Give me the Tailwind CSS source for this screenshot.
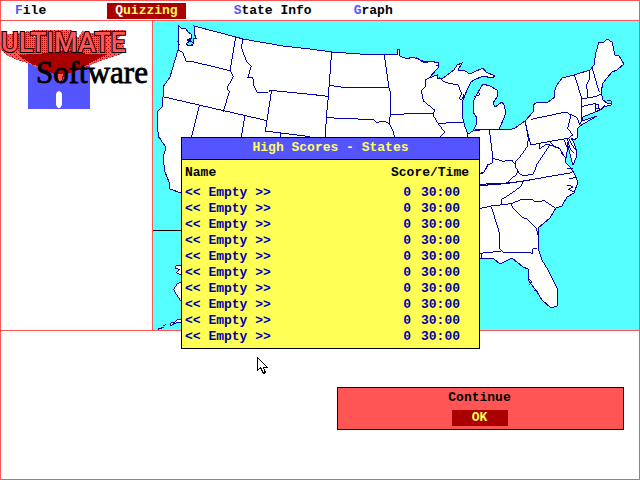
<!DOCTYPE html>
<html lang="en">
<head>
<meta charset="utf-8">
<meta name="viewport" content="width=device-width, initial-scale=1">
<title>Ultimate Software - High Scores</title>
<script src="https://cdn.jsdelivr.net/npm/@tailwindcss/browser@4"></script>
</head>
<body class="relative flex min-h-screen flex-col border border-[#ff5555] bg-white font-['Liberation_Mono',monospace] text-[13px] leading-4 font-bold text-black">
  <nav class="flex h-5 items-center border-b border-[#ff5555] pl-1.5">
    <a href="#" class="mr-[53px] px-2"><span class="text-[#5555ff]">F</span>ile</a>
    <a href="#" class="mr-10 bg-[#aa0000] px-2 text-[#ffff55]"><span class="text-white">Q</span>uizzing</a>
    <a href="#" class="mr-[26px] px-2"><span class="text-[#5555ff]">S</span>tate Info</a>
    <a href="#" class="px-2"><span class="text-[#5555ff]">G</span>raph</a>
  </nav>

  <main class="flex border-b border-[#ff5555]">
    <aside class="w-[152px] shrink-0 border-r border-[#ff5555]">
      <svg class="block w-full" viewBox="1 21 151 100" role="img" aria-label="Ultimate Software">
        <defs>
          <pattern id="dots" width="2" height="2" patternUnits="userSpaceOnUse"><rect width="2" height="2" fill="#ff5555"/><rect width="1" height="1" fill="#aa0000"/></pattern>
          <pattern id="sparse" width="4" height="4" patternUnits="userSpaceOnUse"><rect width="4" height="4" fill="#ff5555"/><rect width="1" height="1" fill="#aa0000"/><rect x="2" y="2" width="1" height="1" fill="#aa0000"/></pattern>
        </defs>
        <g shape-rendering="crispEdges">
          <path d="M28 61H90V109H28Z" fill="#5555ff"/>
          <path d="M1 31 8 34 17 37 19 33 28 31 36 38 32 30H72L78 38 82 31 92 34 100 30H126V33L118 38 124 46 126 52 119 55 100 61 84 68 66 74H56L42 70 28 63 20 61 8 56 1 50Z" fill="url(#sparse)"/>
          <path d="M10 34 26 32 36 41 42 32H72L78 40 88 32 100 36 108 56 84 66H40L22 58Z" fill="url(#dots)"/>
          <path d="M18 55 50 53 66 50 88 54 108 54 92 62 78 70 66 74H54L44 69 30 63Z" fill="#aa0000"/>
          <path d="M56 73H64L62 80 60 82 57 79Z" fill="#ff5555" stroke="#aa0000"/>
        </g>
        <path d="M57 92 59 91 61 92 62 94V105L60 108H58L56 105V94Z" fill="#fff"/>
        <text x="1" y="52" font-family="Roboto" font-weight="500" font-size="27" fill="#ff5555" stroke="#000" stroke-width="2" paint-order="stroke">ULTIMATE</text>
        <text x="36" y="83" font-family="Liberation Serif" font-weight="400" font-size="31" fill="#000" stroke="#000" stroke-width=".8">Software</text>
      </svg>
    </aside>
    <svg class="block min-w-0 flex-1 bg-[#55ffff]" viewBox="153 21 486 309" role="img" aria-label="Map of the United States" fill="none" stroke="#0000aa" shape-rendering="crispEdges">
      <path fill="#fff" d="M178 25 181 28 186 29 188 32 191 34 192 38 187 40 190 41 186 44 189 46 193 44V38H196L194 33 195 30 194 26 236 37 243 39 283 46 310 49 332 52 360 54H397V49H399L400 56 407 59 412 57 418 59 425 63 430 61 439 63 438 68 429 78 437 75V78H443L450 73 454 70 457 65 462 63 458 70 465 71 470 74 474 72 483 68 486 72 495 76 492 78 483 76 474 80 471 82 467 90 463 100 462 115 465 127 468 134 473 131 476 125 477 118 473 112V102L478 92 483 84 490 86 497 90V97L493 103 495 107 502 102 504 105 506 113 501 125 499 129 509 130 515 128 525 121 533 112V105L538 102H548L555 97 554 92 557 85 562 78 574 75 590 70 594 65 596 52 599 42 603 43 607 39 612 42 615 55 619 56 624 64 617 70 612 72 607 78 603 83 601 92 603 100 607 103 611 104V101L607 100 611 101V105L603 107 600 110 583 117 582 121 597 116 590 120 580 126 578 128 577 138 574 140 571 138 574 143 577 152 576 158 573 165 571 158 567 142 567 152 565 162 570 167 574 173 578 182 574 193 567 197 562 206 556 208 550 218 538 228V248L542 260 548 270 557 288V306L551 308 542 300 537 292 532 285 528 280V269L523 267 512 258 500 264 493 258H480L300 300 181 193 170 189 169 182 165 172 163 158 166 147 162 142 158 135 159 138 157 125V112L162 107 163 97V87L170 77 175 60 178 50Z"/>
      <g transform="translate(150 15) scale(.333333)" stroke-width="3">
        <path d="M84 105 98 112 108 138 128 140 240 167M257 65 240 167 250 185 231 219 238 230 220 290M38 245 352 317M148 272 124 368M284 304 274 368M279 71 274 98 289 138 304 154 293 188 308 186 312 212 322 232 355 232 362 224 364 232 346 348 480 365M391 355V368M362 226 510 241M83 78 88 90 83 92M112 78 127 70M114 92 130 92M126 64 120 80 133 82"/>
      </g>
      <g transform="translate(310 15) scale(.333333)" stroke-width="3">
        <path d="M65 110 55 244 49 307 46 368M0 238 55 244M57 211 100 217 235 219M223 118 229 165 235 205 237 220 241 230V298L238 325 248 345 254 368M235 209V219M49 308 190 314 200 322 225 318 238 328M240 298 370 295M358 188 346 194V215L334 228 340 258 374 285 369 300 384 325 404 352 388 368M384 325 461 322M388 188 405 202 445 210 455 238 448 250 454 256 462 238M491 348H510M472 357V368M318 128 335 137 354 141M378 151H388"/>
      </g>
      <g transform="translate(470 15) scale(.333333)" stroke-width="3">
        <path d="M0 352 15 345 58 344H90M58 344 69 430 66 445 52 450 40 474 28 478M165 318 175 370 172 395 150 425 135 440 137 456 148 475 160 482 190 478 200 450 240 390 270 402 278 420 292 430M68 430 100 439 125 435 135 447M143 468 140 478 108 505M52 508 108 505 160 498 305 473M165 318 182 390 235 380 294 370M183 313 288 291 303 300 293 340 308 360 295 370M303 299 322 308 328 328M313 180 336 252 334 318 328 330M334 252 380 244 395 236M357 166 359 190 350 210 353 245M366 158 374 185 388 232M336 274 375 266 386 270 388 286M376 268 378 288M292 370 300 400 312 415M282 374 290 395 300 408M296 370 306 390 318 405M240 380 250 392 268 400M208 388V402L228 388 240 390M270 402 282 420M25 225 28 240 12 245M158 498 158 508M296 490 320 488M292 460 308 462M375 278 395 284 405 270"/>
      </g>
      <g transform="translate(470 180) scale(.333333)" stroke-width="3">
        <path d="M28 17 108 11 180 0M160 3 154 18 132 35 96 58V74M28 86 64 78 124 71 155 58 185 58 196 66 222 62 257 85M124 72 130 86 158 112 172 118 200 146M64 80 90 165 88 205 102 219 175 217 188 220V206L202 206M28 220 92 214M36 220V238M200 148 204 165M292 15 310 20 295 28 312 36M176 298 186 305 178 314M192 330 204 336"/>
      </g>
      <g transform="translate(145 130) scale(.333333)" stroke-width="3">
        <path fill="#fff" d="M112 405 92 408 90 415 103 418 95 428 110 436ZM112 455 98 460 86 478 98 500 112 518ZM112 566 96 570 88 580 110 576ZM76 580 84 576 86 584 76 586ZM54 586 64 584M38 597 56 592 38 598Z"/>
        <path stroke="#000" d="M24 301H112"/>
      </g>
      <path d="M479 174 484 172 488 165M479 185 493 183"/>
    </svg>
  </main>

  <section class="flex grow justify-end pt-14 pr-[15px]">
    <form class="flex h-[43px] w-[287px] flex-col items-center border border-black bg-[#ff5555] pt-0.5 pr-0.5">
      <label for="ok">Continue</label>
      <button id="ok" type="button" class="mt-1 h-4 w-14 bg-[#aa0000] font-bold text-[#ffff55]">OK</button>
    </form>
  </section>

  <section role="dialog" aria-labelledby="title" class="absolute top-[136px] left-[180px] w-[299px] border border-black bg-[#ffff55]">
    <h1 id="title" class="h-[22px] border-b border-black bg-[#5555ff] pt-0.5 text-center text-[#ffff55]">High Scores - States</h1>
    <table class="mt-1 mb-[3px] w-full">
      <thead>
        <tr class="h-[21px] align-top"><th class="pt-px pl-[3px] text-left">Name</th><th colspan="2" class="pt-px pr-2.5 text-right">Score/Time</th></tr>
      </thead>
      <tbody id="scores" class="text-[#0000aa]"></tbody>
    </table>
  </section>

  <svg class="pointer-events-none absolute top-[356px] left-[256px] h-[18px] w-3" viewBox="0 0 12 18" shape-rendering="crispEdges" aria-hidden="true">
    <path d="M.5 .5V13.5L3.5 10.5 6.5 16.5 8.5 15.5 6 10H10Z" fill="#fff" stroke="#000"/>
  </svg>

  <script>
    const body = document.getElementById('scores');
    for (let i = 0; i < 10; i++) {
      body.insertAdjacentHTML('beforeend', '<tr><td class="pl-[3px]">&lt;&lt; Empty &gt;&gt;</td><td class="text-right">0</td><td class="w-[68px] pr-[19px] text-right">30:00</td></tr>');
    }
  </script>
</body>
</html>
